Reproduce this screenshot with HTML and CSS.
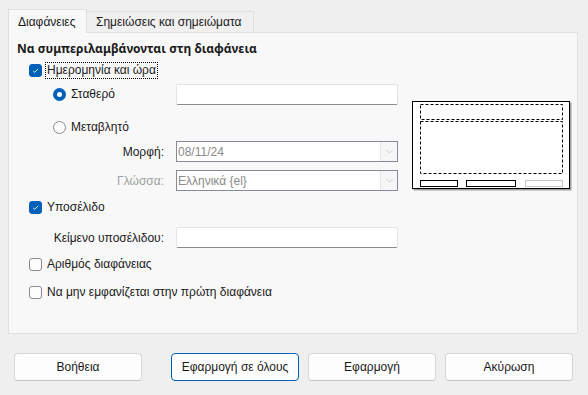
FILE: index.html
```html
<!DOCTYPE html>
<html lang="el">
<head>
<meta charset="utf-8">
<title>Κεφαλίδα και υποσέλιδο</title>
<link rel="stylesheet" href="styles.css">
</head>
<body>
<div class="dialog">
  <div class="tabs">
    <div class="tab active">Διαφάνειες</div>
    <div class="tab">Σημειώσεις και σημειώματα</div>
  </div>
  <div class="panel">
    <div class="form">
      <div class="row heading">Να συμπεριλαμβάνονται στη διαφάνεια</div>
      <div class="row r-date lvl1">
        <span class="check on"><svg viewBox="0 0 13 13"><path d="M3.6 6.8 L5.6 8.7 L9.5 4.6" fill="none" stroke="#fff" stroke-width="1"/></svg></span>
        <span class="lbl focus">Ημερομηνία και ώρα</span>
      </div>
      <div class="row r-fixed lvl2">
        <span class="radio on"></span>
        <span class="lbl grow">Σταθερό</span>
        <span class="field"></span>
      </div>
      <div class="row r-var lvl2">
        <span class="radio"></span>
        <span class="lbl">Μεταβλητό</span>
      </div>
      <div class="row r-fmt">
        <span class="rlabel">Μορφή:</span>
        <span class="combo"><span class="ctext">08/11/24</span><span class="cbtn"><svg viewBox="0 0 10 6"><path d="M1 1 L5 5 L9 1" fill="none" stroke="#c4c4c4" stroke-width="1"/></svg></span></span>
      </div>
      <div class="row r-lang">
        <span class="rlabel dim">Γλώσσα:</span>
        <span class="combo"><span class="ctext">Ελληνικά {el}</span><span class="cbtn"><svg viewBox="0 0 10 6"><path d="M1 1 L5 5 L9 1" fill="none" stroke="#c4c4c4" stroke-width="1"/></svg></span></span>
      </div>
      <div class="row r-foot lvl1">
        <span class="check on"><svg viewBox="0 0 13 13"><path d="M3.6 6.8 L5.6 8.7 L9.5 4.6" fill="none" stroke="#fff" stroke-width="1"/></svg></span>
        <span class="lbl">Υποσέλιδο</span>
      </div>
      <div class="row r-ftext">
        <span class="rlabel">Κείμενο υποσέλιδου:</span>
        <span class="field"></span>
      </div>
      <div class="row r-num lvl1">
        <span class="check"></span>
        <span class="lbl">Αριθμός διαφάνειας</span>
      </div>
      <div class="row r-first lvl1">
        <span class="check"></span>
        <span class="lbl">Να μην εμφανίζεται στην πρώτη διαφάνεια</span>
      </div>
    </div>
    <div class="preview">
      <svg width="160" height="90" viewBox="0 0 160 90">
        <rect x="1.5" y="1.5" width="158" height="88" fill="#a0a0a0"/>
        <rect x="0.5" y="0.5" width="157" height="87" fill="#fff" stroke="#000" stroke-width="1"/>
        <rect x="8.5" y="3.5" width="142" height="15" fill="none" stroke="#000" stroke-width="1" stroke-dasharray="3 2"/>
        <rect x="8.5" y="20.5" width="142" height="52" fill="none" stroke="#000" stroke-width="1" stroke-dasharray="3 2"/>
        <rect x="8.5" y="79.5" width="37" height="6" fill="none" stroke="#000" stroke-width="1"/>
        <rect x="54.5" y="79.5" width="49" height="6" fill="none" stroke="#000" stroke-width="1"/>
        <rect x="113.5" y="79.5" width="37" height="6" fill="none" stroke="#c8c8c8" stroke-width="1"/>
      </svg>
    </div>
  </div>
  <div class="buttons">
    <button class="btn help">Βοήθεια</button>
    <button class="btn default">Εφαρμογή σε όλους</button>
    <button class="btn">Εφαρμογή</button>
    <button class="btn">Ακύρωση</button>
  </div>
</div>
</body>
</html>
```
FILE: styles.css
```css
* { box-sizing: border-box; }
html, body { margin: 0; padding: 0; }
body {
  width: 588px;
  height: 395px;
  background: #efefef;
  font-family: "Liberation Sans", Arial, sans-serif;
  font-size: 12px;
  color: #1a1a1a;
  overflow: hidden;
}
.dialog { padding-top: 9px; }

.tabs { display: flex; align-items: flex-end; padding-left: 8px; height: 23px; }
.tab {
  height: 21px;
  padding: 0 9px;
  border: 1px solid #dedede;
  border-bottom: none;
  background: #f0f0f0;
  display: flex;
  align-items: center;
  white-space: nowrap;
}
.tab.active {
  background: #f8f8f8;
  position: relative;
  z-index: 1;
  margin-bottom: -1px;
  height: 24px;
  width: 79px;
}
.tab + .tab { border-left: none; width: 167px; }

.panel {
  margin-left: 8px;
  width: 570px;
  height: 302px;
  border: 1px solid #e0e0e0;
  background: #f8f8f8;
  display: flex;
}
.form { width: 403px; padding-left: 8px; padding-top: 5px; }
.row { display: flex; align-items: center; height: 21px; white-space: nowrap; }
.heading { font-family: "Noto Sans", sans-serif; font-weight: bold; height: 20px; }
.lvl1 { padding-left: 12px; }
.lvl2 { padding-left: 36px; }
.r-date { margin-top: 2px; }
.r-fixed { margin-top: 3px; }
.r-var { margin-top: 12px; }
.r-fmt { margin-top: 3px; }
.r-lang { margin-top: 8px; }
.r-foot { margin-top: 6px; }
.r-ftext { margin-top: 9px; }
.r-num { margin-top: 6px; }
.r-first { margin-top: 7px; }

.check {
  width: 13px; height: 13px;
  border: 1px solid #8a8a8a;
  border-radius: 3px;
  background: #fdfdfd;
  margin-right: 4px;
  display: flex;
}
.check.on { background: #005fb8; border-color: #005fb8; }
.check svg { width: 11px; height: 11px; }
.radio {
  width: 13px; height: 13px;
  border: 1px solid #8a8a8a;
  border-radius: 50%;
  background: #fdfdfd;
  margin-right: 4px;
}
.radio.on { border: 4px solid #005fb8; background: #fff; }
.lbl { padding: 0 1px; line-height: 15px; }
.focus { outline: 1px dotted #000; outline-offset: 0; }
.grow { flex: 1; }

.field {
  width: 222px; height: 21px;
  background: #fff;
  border: 1px solid #e4e4e4;
  border-bottom-color: #8c8c8c;
  border-radius: 2px;
}
.r-fixed .field { margin-right: 14px; }
.rlabel { width: 148px; text-align: right; padding-right: 1px; margin-right: 11px; }
.rlabel.dim { color: #a0a0a0; }
.combo {
  width: 222px; height: 21px;
  border: 1px solid #858a94;
  background: #fff;
  display: flex; align-items: center;
  color: #8a8a8a;
}
.ctext { flex: 1; padding-left: 1px; }
.cbtn {
  width: 17px; height: 19px;
  border-left: 1px solid #e6e6e6;
  background: #f6f6f6;
  display: flex; align-items: center; justify-content: center;
}
.cbtn svg { width: 9px; height: 5px; }

.preview { padding-top: 68px; }
.preview svg { display: block; }

.buttons { display: flex; gap: 9px; padding-left: 14px; margin-top: 19px; }
.btn {
  width: 128px; height: 28px;
  font-family: inherit; font-size: 12px; color: #1a1a1a;
  background: #fdfdfd;
  border: 1px solid #d6d6d6;
  border-bottom-color: #c2c2c2;
  border-radius: 4px;
  padding: 0;
}
.btn.help { margin-right: 20px; }
.btn.default { border-color: #005fb8; }
```
